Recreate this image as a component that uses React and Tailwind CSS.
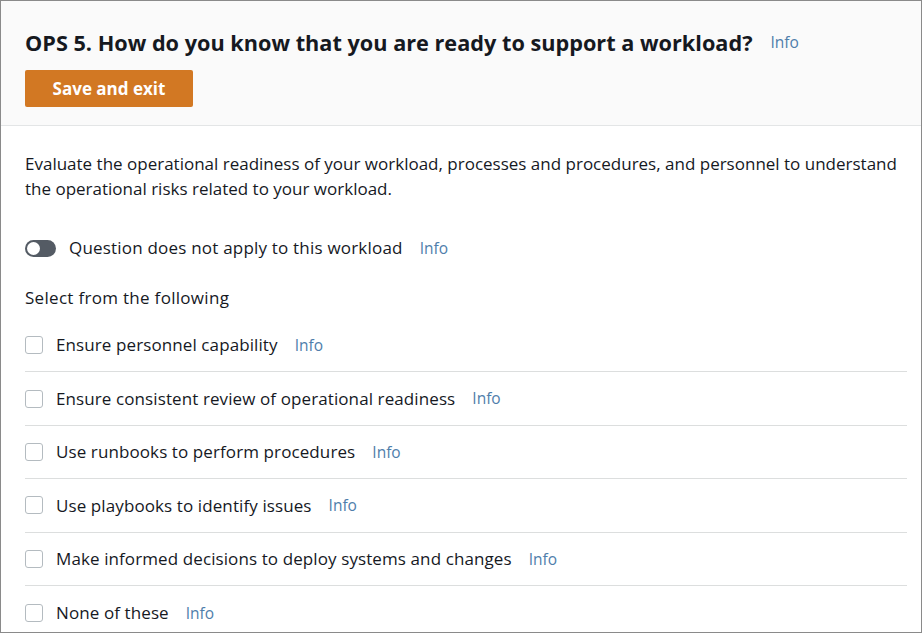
import React from 'react';

const options = [
  'Ensure personnel capability',
  'Ensure consistent review of operational readiness',
  'Use runbooks to perform procedures',
  'Use playbooks to identify issues',
  'Make informed decisions to deploy systems and changes',
  'None of these',
];

function InfoLink() {
  return <span className="text-[15.5px] text-[#4f7eab]">Info</span>;
}

export default function App() {
  return (
    <div
      className="h-[633px] w-[922px] overflow-hidden border border-[#8a8a8a] bg-white text-[#16191f]"
      style={{ fontFamily: '"Open Sans", "Noto Sans", sans-serif' }}
    >
      <div className="border-b border-[#e3e5e6] bg-[#fafafa] px-[24px] pb-[18px] pt-[28px]">
        <div className="flex h-[28px] items-center gap-[18px]">
          <h1 className="text-[21.7px] font-bold">
            OPS 5. How do you know that you are ready to support a workload?
          </h1>
          <InfoLink />
        </div>
        <button
          type="button"
          className="mt-[13px] h-[37px] w-[168px] rounded-[2px] bg-[#d27823] text-[17px] font-bold text-white"
        >
          Save and exit
        </button>
      </div>

      <div className="pl-[24px] pr-[14px] pt-[25px]">
        <p className="text-[17px] leading-[25px]">
          Evaluate the operational readiness of your workload, processes and procedures, and personnel to understand
          the operational risks related to your workload.
        </p>

        <div className="mt-[35px] flex h-[24px] items-center gap-[13px]">
          <div className="flex h-[17px] w-[31px] items-center rounded-full bg-[#545b64] px-[2px]">
            <div className="h-[13px] w-[13px] rounded-full bg-white" />
          </div>
          <span className="text-[17px] tracking-[0.2px]">Question does not apply to this workload</span>
          <span className="ml-[4px]">
            <InfoLink />
          </span>
        </div>

        <p className="mt-[26px] h-[24px] text-[17px] leading-[24px] tracking-[0.3px]">Select from the following</p>

        <div className="mt-[9px]">
          {options.map((label, i) => (
            <div
              key={label}
              className={`flex h-[53.4px] items-center gap-[13px] ${i < options.length - 1 ? 'border-b border-[#dcdede]' : ''}`}
            >
              <div className="h-[18px] w-[18px] rounded-[3px] border border-[#b4bbc0] bg-white" />
              <span className="text-[17px] tracking-[0.1px]">{label}</span>
              <span className="ml-[4px]">
                <InfoLink />
              </span>
            </div>
          ))}
        </div>
      </div>
    </div>
  );
}
